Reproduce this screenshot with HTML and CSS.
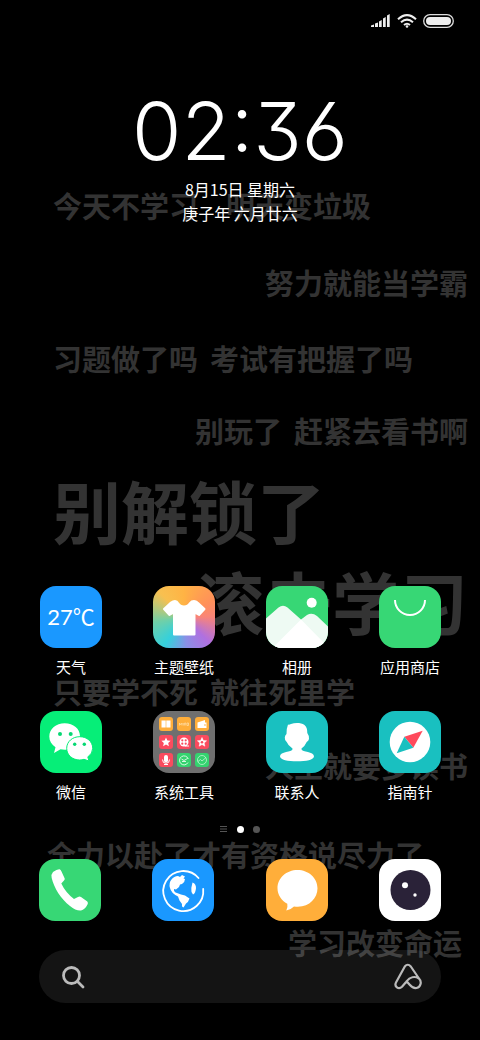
FILE: index.html
```html
<!DOCTYPE html>
<html lang="zh-CN">
<head>
	<meta charset="utf-8">
	<meta name="viewport" content="width=device-width, initial-scale=1">
	<title>主屏幕</title>
	<link rel="stylesheet" href="styles.css">
</head>
<body>

<!-- Wallpaper, behind everything -->
<div class="wallpaper">
	<p><span>今天不学习</span><span class="far">明天变垃圾</span></p>
	<p class="right">努力就能当学霸</p>
	<p><span>习题做了吗</span><span>考试有把握了吗</span></p>
	<p class="right"><span>别玩了</span><span>赶紧去看书啊</span></p>
	<p class="big">别解锁了</p>
	<p class="big right">滚去学习</p>
	<p><span>只要学不死</span><span>就往死里学</span></p>
	<p class="right">人生就要多读书</p>
	<p class="wide">全力以赴了才有资格说尽力了</p>
	<p class="right last">学习改变命运</p>
</div>

<header class="status-bar">
	<svg width="20" height="14" viewBox="0 0 20 14" fill="#eee">
		<path d="M0 13V11.500L3 10.500V13zM4 13V9.500L7 8.500V13zM8 13V7.500L10.700 6V13zM12 13V4.500L14.700 3V13zM16 13V1.500L18.700 0V13z"/>
	</svg>
	<svg width="20" height="14" viewBox="0 0 20 14" fill="none" stroke="#eee" stroke-width="2">
		<path d="M1 5.300Q10-3 19 5.300M4 8.300Q10 3 16 8.300M7 11Q10 8.500 13 11"/>
		<circle cx="10" cy="12.500" r="1.300" fill="#eee" stroke="none"/>
	</svg>
	<svg width="31" height="14" viewBox="0 0 31 14">
		<rect x="0.700" y="0.700" width="29.600" height="12.600" rx="6.300" fill="none" stroke="#ddd" stroke-width="1.300"/>
		<rect x="3" y="3" width="25" height="8" rx="4" fill="#eee"/>
	</svg>
</header>

<section class="clock">
	<time class="time">02:36</time>
	<div class="date">8月15日 星期六</div>
	<div class="date">庚子年 六月廿六</div>
</section>

<main class="apps">
	<a class="app" href="#">
		<span class="icon blue weather">27℃</span>
		<span class="label">天气</span>
	</a>
	<a class="app" href="#">
		<span class="icon themes">
			<svg viewBox="0 0 62 62" fill="#fff" stroke="#fff" stroke-width="2" stroke-linejoin="round">
				<path d="M22 15Q24 15 25 17Q27 20.500 31 20.500T37 17Q38.500 15 41 15Q43 15 44.500 16.500L51.500 23L46 29L41.500 26.500V48.500H21V26.500L16.500 29L11 23L18 16.500Q20 15 22 15z"/>
			</svg>
		</span>
		<span class="label">主题壁纸</span>
	</a>
	<a class="app" href="#">
		<span class="icon green">
			<svg viewBox="0 0 62 62">
				<circle cx="45.700" cy="16.700" r="5" fill="#fff"/>
				<path d="M0 32.500L12.500 21.500Q17 18 21.500 21.500L35 33.500L41 29Q46 26 51 30L62 40.500V62H0z" fill="#eefaf3"/>
				<path d="M35 33.500L62 61V62H6.500z" fill="#fff"/>
			</svg>
		</span>
		<span class="label">相册</span>
	</a>
	<a class="app" href="#">
		<span class="icon green">
			<svg viewBox="0 0 62 62" fill="none" stroke="#fff" stroke-width="2">
				<path d="M16 14a15 15 0 0 0 30 0"/>
			</svg>
		</span>
		<span class="label">应用商店</span>
	</a>

	<a class="app" href="#">
		<span class="icon wechat">
			<svg viewBox="0 0 62 62">
				<path d="M24.700 12.300C16 12.300 9.300 18 9.300 25.500C9.300 30 11.500 33.500 15.500 36.300L14 42L20.500 38.300Q24 39 28 38.500L40 25C40 18 33.500 12.300 24.700 12.300z" fill="#fff"/>
				<path d="M39.700 25.700C32.500 25.700 26.700 30.500 26.700 37.300S32.500 49 39.700 49Q42 49 44 48.300L49 50L47.800 46Q52.700 42.500 52.700 37.300C52.700 30.500 47 25.700 39.700 25.700z" fill="#fff" stroke="#06ec78" stroke-width="1"/>
				<g fill="#06d873">
					<circle cx="20" cy="23" r="2"/>
					<circle cx="30.700" cy="23" r="2"/>
					<circle cx="34.700" cy="33.300" r="1.700"/>
					<circle cx="44.300" cy="33.300" r="1.700"/>
				</g>
			</svg>
		</span>
		<span class="label">微信</span>
	</a>
	<a class="app" href="#">
		<span class="icon folder">
			<i class="orange"><svg viewBox="0 0 14 14" fill="#fff"><path d="M2.500 3.500h4.200v7H2.500zM7.300 3.500h4.200v7H7.300z"/></svg></i>
			<i class="orange"><svg viewBox="0 0 14 14" fill="none" stroke="#fde0ae" stroke-width="0.700"><path d="M2.500 8.500V6l1.300 1.800L5 6v2.500M6.300 6v2.500M7.600 8.500V6h1.200v2.500M10 6v2.500h1.500V6z"/></svg></i>
			<i class="orange"><svg viewBox="0 0 14 14"><path d="M2.500 5.500L10 3v2.500h1.500v5.500h-9z" fill="#fff"/><circle cx="10" cy="8" r="0.800" fill="#fbab35"/></svg></i>
			<i class="red"><svg viewBox="0 0 14 14" fill="#fff"><path d="M7 2.500l1.400 3 3.200.3-2.400 2.200.7 3.200L7 9.500l-2.900 1.700.7-3.200-2.400-2.200 3.200-.3z"/></svg></i>
			<i class="red"><svg viewBox="0 0 14 14"><circle cx="7" cy="7" r="4.500" fill="#fff"/><g fill="#fa4b5e"><circle cx="5.300" cy="5.300" r="1.100"/><circle cx="8.700" cy="5.300" r="1.100"/><circle cx="5.300" cy="8.700" r="1.100"/><circle cx="8.700" cy="8.700" r="1.100"/></g><path d="M8 11h4" stroke="#fff"/></svg></i>
			<i class="red"><svg viewBox="0 0 14 14"><path d="M7 2.500l1.400 3 3.200.3-2.400 2.200.7 3.200L7 9.500l-2.900 1.700.7-3.200-2.400-2.200 3.200-.3z" fill="#fff" stroke="#fff" stroke-width="0.500"/><circle cx="7" cy="7.200" r="1.300" fill="#fa4b5e"/></svg></i>
			<i class="red"><svg viewBox="0 0 14 14"><rect x="5" y="2" width="4" height="7.500" rx="2" fill="#fff"/><path d="M3.500 6.500a3.500 3.800 0 0 0 7 0M5 11.500h4" fill="none" stroke="#fff"/></svg></i>
			<i class="lime"><svg viewBox="0 0 14 14" fill="none" stroke="#fff" stroke-width="0.800"><path d="M11.300 6A4.500 4.500 0 1 0 11 9.500"/><path d="M4.500 6L7 7.500L10.500 5.500M5 8.500h4"/></svg></i>
			<i class="lime"><svg viewBox="0 0 14 14" fill="none" stroke="#d5f7e2" stroke-width="0.700"><circle cx="7" cy="7" r="4.500"/><path d="M3 8.500L5.500 6.500L7 8L11 4.500"/></svg></i>
		</span>
		<span class="label">系统工具</span>
	</a>
	<a class="app" href="#">
		<span class="icon teal">
			<svg viewBox="0 0 62 62" fill="#fff">
				<path d="M22 13.500Q23 14 25 13C29 11.500 35 11.500 38.500 14Q41.500 16.500 41.300 22Q43.500 25 43 28Q42.500 30 40.700 31Q39 35 35.500 37.500V40H26.500V37.500Q22 34.500 20.700 31Q18.500 29 18.800 26.500Q19 24 20.500 23Q20.500 17 22 13.500z"/>
				<path d="M26.500 38.500h9C36 41 48 40.500 48 45.300C48 49 40 50.300 31 50.300S14 49 14 45.300C14 40.500 26 41 26.500 38.500z"/>
			</svg>
		</span>
		<span class="label">联系人</span>
	</a>
	<a class="app" href="#">
		<span class="icon teal">
			<svg viewBox="0 0 62 62">
				<circle cx="31" cy="31" r="20.300" fill="#fff"/>
				<path d="M25.300 25.700L43.700 19.700L34.300 36.700z" fill="#ff4a5c"/>
				<path d="M25.300 25.700L34.300 36.700L17.700 42.300z" fill="#19c0c0"/>
			</svg>
		</span>
		<span class="label">指南针</span>
	</a>
</main>

<div class="pager">
	<svg width="8" height="8" viewBox="0 0 8 8" stroke="#555"><path d="M0 1.500h7M0 4h7M0 6.500h7"/></svg>
	<span class="dot active"></span>
	<span class="dot"></span>
</div>

<nav class="dock">
	<a class="icon green" href="#" title="电话">
		<svg viewBox="0 0 62 62" fill="#fff">
			<path d="M14 13Q18 10 20.500 10.200Q21.800 10.500 22.500 12.500L25.700 19.500Q26 20.700 25 21.500L22.300 24.500Q26.500 33.500 35 40L39 38Q40.500 37 42 38L48.300 42.500Q49.500 43.800 48.500 45.500Q46 50.500 42 51.500Q37 52 31 47C22 40 15 29 12.700 19Q12 15 14 13z"/>
		</svg>
	</a>
	<a class="icon blue" href="#" title="浏览器">
		<svg viewBox="0 0 62 62" fill="#fff">
			<path d="M46.500 19A20 20 0 1 0 51.200 30" fill="none" stroke="#fff" stroke-width="1.800" stroke-linecap="round"/>
			<path d="M18 29Q16.500 24 19.500 20.500Q22 17 26 17L28 18L30 16L33 17.500L31.500 19.500L33 20Q33 23 30 25L28 25.500L27 28L24 30.500L22 30Q21.500 33 25 34L29 35.500L33 36.500L37.500 39.500Q36.500 43 34 44.500L31.500 48.500Q29.500 48 30 45L27.500 41.500L26 37.500Q19 34 18 29z"/>
			<path d="M40.500 23.500Q44 24.500 44 29Q43.500 34.500 41 35.500Q38.800 33 39.300 29z"/>
		</svg>
	</a>
	<a class="icon orange" href="#" title="短信">
		<svg viewBox="0 0 62 62" fill="#fff">
			<path d="M31.500 11C20.500 11 11.500 19 11.500 29.300C11.500 36 15.500 41.500 21.300 44.800Q22 48.500 20.300 51.500Q25 50.500 28 47.400C42 49.500 51.500 40 51.500 29.300C51.500 19 42.500 11 31.500 11z"/>
		</svg>
	</a>
	<a class="icon camera" href="#" title="相机">
		<svg viewBox="0 0 62 62" fill="#fff">
			<circle cx="31.500" cy="31" r="20" fill="#2a2238"/>
			<circle cx="26" cy="26.300" r="3"/>
			<circle cx="36" cy="36" r="1.700"/>
		</svg>
	</a>
</nav>

<form class="search">
	<svg width="24" height="24" viewBox="0 0 24 24" fill="none" stroke="#bbb" stroke-width="2.800" stroke-linecap="round">
		<circle cx="10.500" cy="10.500" r="8"/>
		<path d="M16.500 16.500L22 22"/>
	</svg>
	<input type="text" aria-label="搜索">
	<button type="button" title="小爱同学">
		<svg width="28" height="28" viewBox="0 0 28 28" fill="none" stroke="#bbb" stroke-width="2.200" stroke-linecap="round" stroke-linejoin="round">
			<path d="M12.500 18.500C16 14 21 13 25 15.500C28 18.500 27 24 22.500 25C17.500 26 16 21 12.500 18.500L8 23.800C4.500 27 0 23.500 2 19.500L10.800 3.500Q13.700 0 16.800 3.500L25 15.500"/>
		</svg>
	</button>
</form>

</body>
</html>
```
FILE: styles.css
```css
:root {
	--side: 39px;
	--icon-size: 62px;
}

* {
	box-sizing: border-box;
}

body {
	position: relative;
	display: flex;
	flex-direction: column;
	min-height: 100vh;
	margin: 0;
	padding-bottom: 37px;
	font-family: "Noto Sans CJK SC", sans-serif;
	color: white;
	background: black;
	overflow-x: hidden;
}

svg {
	display: block;
}

a {
	color: inherit;
	text-decoration: none;
}

/* Wallpaper */
.wallpaper {
	position: absolute;
	top: 0;
	left: 0;
	right: 0;
	z-index: -1;
	display: grid;
	grid-template-rows: 77px 76px 72px 56px 91px 114px 74px 89px 88px 40px;
	padding: 185px 12px 0 53px;
	color: #333;
	font-size: 29px;
	font-weight: bold;
	line-height: 40px;
	white-space: nowrap;
}

.wallpaper p {
	display: flex;
	gap: 12px;
	margin: 0;
}

.wallpaper .right {
	justify-content: flex-end;
}

.wallpaper .far {
	margin-left: 16px;
}

.wallpaper .big {
	font-size: 68px;
	line-height: 88px;
}

.wallpaper .wide {
	margin-left: -6px;
}

.wallpaper .last {
	margin-right: 6px;
}

/* Status bar */
.status-bar {
	display: flex;
	justify-content: flex-end;
	align-items: center;
	gap: 6px;
	height: 42px;
	padding-right: 26px;
}

/* Clock */
.clock {
	margin: 43px 0 auto;
	text-align: center;
}

.time {
	display: block;
	font-family: Inter, sans-serif;
	font-size: 80px;
	font-weight: 300;
	line-height: 92px;
	font-feature-settings: "cv03", "cv09";
}

.date {
	font-size: 16px;
	line-height: 24px;
}

/* App grid */
.apps, .dock {
	display: grid;
	grid-template-columns: repeat(4, var(--icon-size));
	justify-content: space-between;
	row-gap: 32px;
	padding: 0 var(--side);
}

.apps {
	padding-left: 40px;
}

.label {
	display: block;
	margin-top: 7px;
	font-size: 15px;
	line-height: 24px;
	text-align: center;
	white-space: nowrap;
}

.icon {
	display: block;
	width: var(--icon-size);
	height: var(--icon-size);
	border-radius: 16px;
	overflow: hidden;
}

.blue {
	background: #1a98ff;
}

.green {
	background: #37d775;
}

.teal {
	background: #19c0c0;
}

.orange {
	background: #ffae3a;
}

.red {
	background: #fa4b5e;
}

.lime {
	background: #34d36f;
}

.wechat {
	background: #06ee78;
}

.camera {
	background: white;
}

.weather {
	font-family: Lato, "Noto Sans CJK SC", sans-serif;
	font-size: 22px;
	line-height: 62px;
	text-align: center;
}

.themes {
	background: conic-gradient(#ffb344, #ff905a 60deg, #f98478 90deg, #b070e0 135deg, #8a90e6 175deg, #35d0dc 215deg, #70d0a8 260deg, #f8c050 315deg, #ffb344);
}

.folder {
	display: grid;
	grid-template-columns: repeat(3, 14px);
	gap: 4px;
	padding: 6px;
	background: #6f6f6f;
}

.folder i {
	height: 14px;
	border-radius: 3px;
}

/* Page dots */
.pager {
	display: flex;
	justify-content: center;
	align-items: center;
	gap: 9px;
	margin: 21px 0 26px;
}

.dot {
	width: 7px;
	height: 7px;
	border-radius: 50%;
	background: #555;
}

.dot.active {
	background: white;
}

/* Search */
.search {
	display: flex;
	align-items: center;
	height: 53px;
	margin: 29px var(--side) 0;
	padding: 0 19px 0 22px;
	border-radius: 27px;
	background: rgba(255, 255, 255, 0.08);
}

.search input {
	flex: 1;
	min-width: 0;
	border: none;
	outline: none;
	color: white;
	font-size: 16px;
	background: none;
}

.search button {
	padding: 0;
	border: none;
	background: none;
}
```
